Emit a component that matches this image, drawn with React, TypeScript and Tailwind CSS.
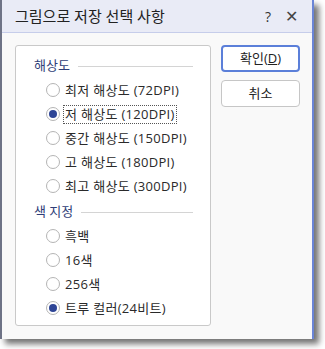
import React from 'react';

const FONT = { fontFamily: '"Open Sans", "Noto Sans CJK KR", sans-serif' };

type Opt = { label: string; checked?: boolean; focus?: boolean };

const RESOLUTIONS: Opt[] = [
  { label: '최저 해상도 (72DPI)' },
  { label: '저 해상도 (120DPI)', checked: true, focus: true },
  { label: '중간 해상도 (150DPI)' },
  { label: '고 해상도 (180DPI)' },
  { label: '최고 해상도 (300DPI)' },
];

const COLORS: Opt[] = [
  { label: '흑백' },
  { label: '16색' },
  { label: '256색' },
  { label: '트루 컬러(24비트)', checked: true },
];

function Radio({ opt }: { opt: Opt }) {
  return (
    <div className="flex h-[24px] items-center pl-[30px]">
      <span className="flex h-[14px] w-[14px] items-center justify-center rounded-full border border-[#b4b4b4] bg-white">
        {opt.checked && <span className="h-[8px] w-[8px] rounded-full bg-[#2e4596]" />}
      </span>
      <span
        className={
          'ml-[4px] px-[1px] text-[13px] leading-[17px] tracking-[0.3px] text-[#2a2a2a] ' +
          (opt.focus ? 'outline outline-1 outline-dotted outline-[#555]' : '')
        }
      >
        {opt.label}
      </span>
    </div>
  );
}

function Section({ title, options }: { title: string; options: Opt[] }) {
  return (
    <div>
      <div className="flex h-[24px] items-center pl-[18px] pr-[17px]">
        <span className="text-[13px] text-[#2f3e78]">{title}</span>
        <span className="ml-[8px] h-px flex-1 bg-[#d4d4d4]" />
      </div>
      {options.map((o) => (
        <Radio key={o.label} opt={o} />
      ))}
    </div>
  );
}

export default function App() {
  return (
    <div className="h-[349px] w-[325px] bg-white" style={FONT}>
      <div className="flex h-[339px] w-[314px] flex-col border-l-2 border-r-2 border-l-[#6e7386] border-r-[#6a85d6] bg-[#f9f9f9] shadow-[5px_5px_6px_rgba(0,0,0,0.55)]">
        <div className="flex h-[33px] shrink-0 items-center border-b border-[#c6cdea] bg-[#e9ebf6] pl-[13px] pr-[14px]">
          <span className="flex-1 text-[15px] text-[#222]">그림으로 저장 선택 사항</span>
          <span className="text-[14px] text-[#333]">?</span>
          <span className="ml-[14px] text-[16px] text-[#444]">✕</span>
        </div>
        <div className="flex pl-[13px] pt-[12px]">
          <div className="flex h-[281px] w-[196px] flex-col rounded-[3px] border border-[#c9c9c9] bg-white pt-[8px]">
            <Section title="해상도" options={RESOLUTIONS} />
            <div className="h-[2px]" />
            <Section title="색 지정" options={COLORS} />
          </div>
          <div className="ml-[10px] flex flex-col gap-[8px]">
            <button className="flex h-[27px] w-[79px] items-center justify-center rounded-[4px] border-2 border-[#5b7fd9] bg-white text-[13px] text-[#222]">
              확인(<span className="underline">D</span>)
            </button>
            <button className="flex h-[27px] w-[79px] items-center justify-center rounded-[4px] border border-[#c6c6c6] bg-white text-[13px] text-[#222]">
              취소
            </button>
          </div>
        </div>
      </div>
    </div>
  );
}
